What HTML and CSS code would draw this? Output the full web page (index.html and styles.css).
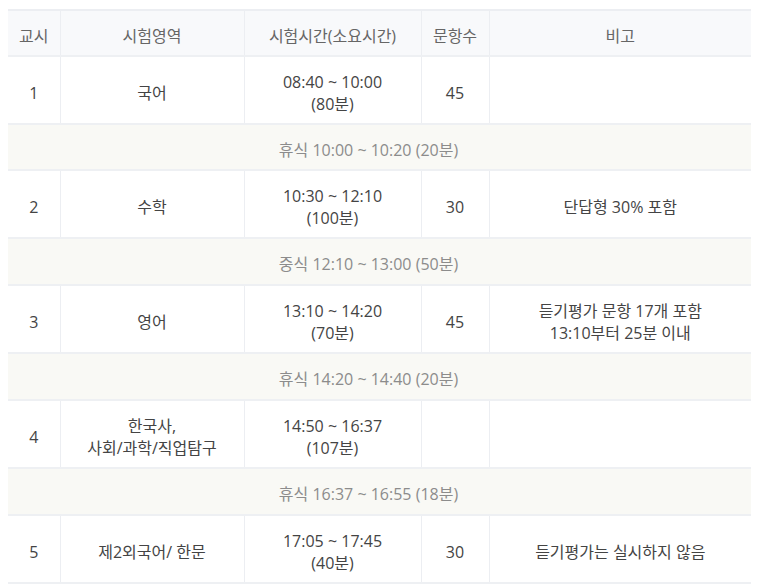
FILE: index.html
```html
<!DOCTYPE html>
<html lang="ko">
<head>
<meta charset="utf-8">
<link rel="stylesheet" href="styles.css">
</head>
<body>
<div class="wrap">
<table class="exam">
  <colgroup>
    <col class="c1"><col class="c2"><col class="c3"><col class="c4"><col class="c5">
  </colgroup>
  <thead>
    <tr><th>교시</th><th>시험영역</th><th>시험시간(소요시간)</th><th>문항수</th><th>비고</th></tr>
  </thead>
  <tbody>
    <tr class="row"><td>1</td><td>국어</td><td>08:40 ~ 10:00<br>(80분)</td><td class="num">45</td><td></td></tr>
    <tr class="brk short"><td colspan="5">휴식 10:00 ~ 10:20 (20분)</td></tr>
    <tr class="row"><td>2</td><td>수학</td><td>10:30 ~ 12:10<br>(100분)</td><td class="num">30</td><td>단답형 30% 포함</td></tr>
    <tr class="brk"><td colspan="5">중식 12:10 ~ 13:00 (50분)</td></tr>
    <tr class="row"><td>3</td><td>영어</td><td>13:10 ~ 14:20<br>(70분)</td><td class="num">45</td><td>듣기평가 문항 17개 포함<br>13:10부터 25분 이내</td></tr>
    <tr class="brk"><td colspan="5">휴식 14:20 ~ 14:40 (20분)</td></tr>
    <tr class="row"><td>4</td><td>한국사,<br>사회/과학/직업탐구</td><td>14:50 ~ 16:37<br>(107분)</td><td></td><td></td></tr>
    <tr class="brk"><td colspan="5">휴식 16:37 ~ 16:55 (18분)</td></tr>
    <tr class="row"><td>5</td><td>제2외국어/ 한문</td><td>17:05 ~ 17:45<br>(40분)</td><td class="num">30</td><td>듣기평가는 실시하지 않음</td></tr>
  </tbody>
</table>
</div>
</body>
</html>
```

FILE: styles.css
```css
html, body {
  margin: 0;
  padding: 0;
  background: #ffffff;
}
.wrap {
  padding: 9px 8px 0 8px;
}
.exam {
  width: 743px;
  border-collapse: collapse;
  table-layout: fixed;
  font-family: "Open Sans", "Noto Sans CJK KR", sans-serif;
  font-size: 16px;
  line-height: 22px;
  color: #444;
  border-top: 2px solid #eceef2;
}
.c1 { width: 52px; }
.c2 { width: 184px; }
.c3 { width: 177px; }
.c4 { width: 68px; }
.c5 { width: 262px; }
.exam th, .exam td {
  text-align: center;
  vertical-align: middle;
  padding: 5px 0 0 0;
  border-bottom: 2px solid #eef0f3;
  border-left: 1px solid #eceef2;
  white-space: nowrap;
}
.exam th:first-child, .exam td:first-child {
  border-left: none;
}
.exam th {
  font-weight: normal;
  color: #666;
  background: #f8f9fb;
  height: 39px;
}
.row td {
  height: 61px;
}
.brk td {
  background: #f9f9f5;
  color: #8c8c8c;
  height: 40px;
  padding-right: 22px;
}
.brk.short td {
  height: 39px;
}
```
